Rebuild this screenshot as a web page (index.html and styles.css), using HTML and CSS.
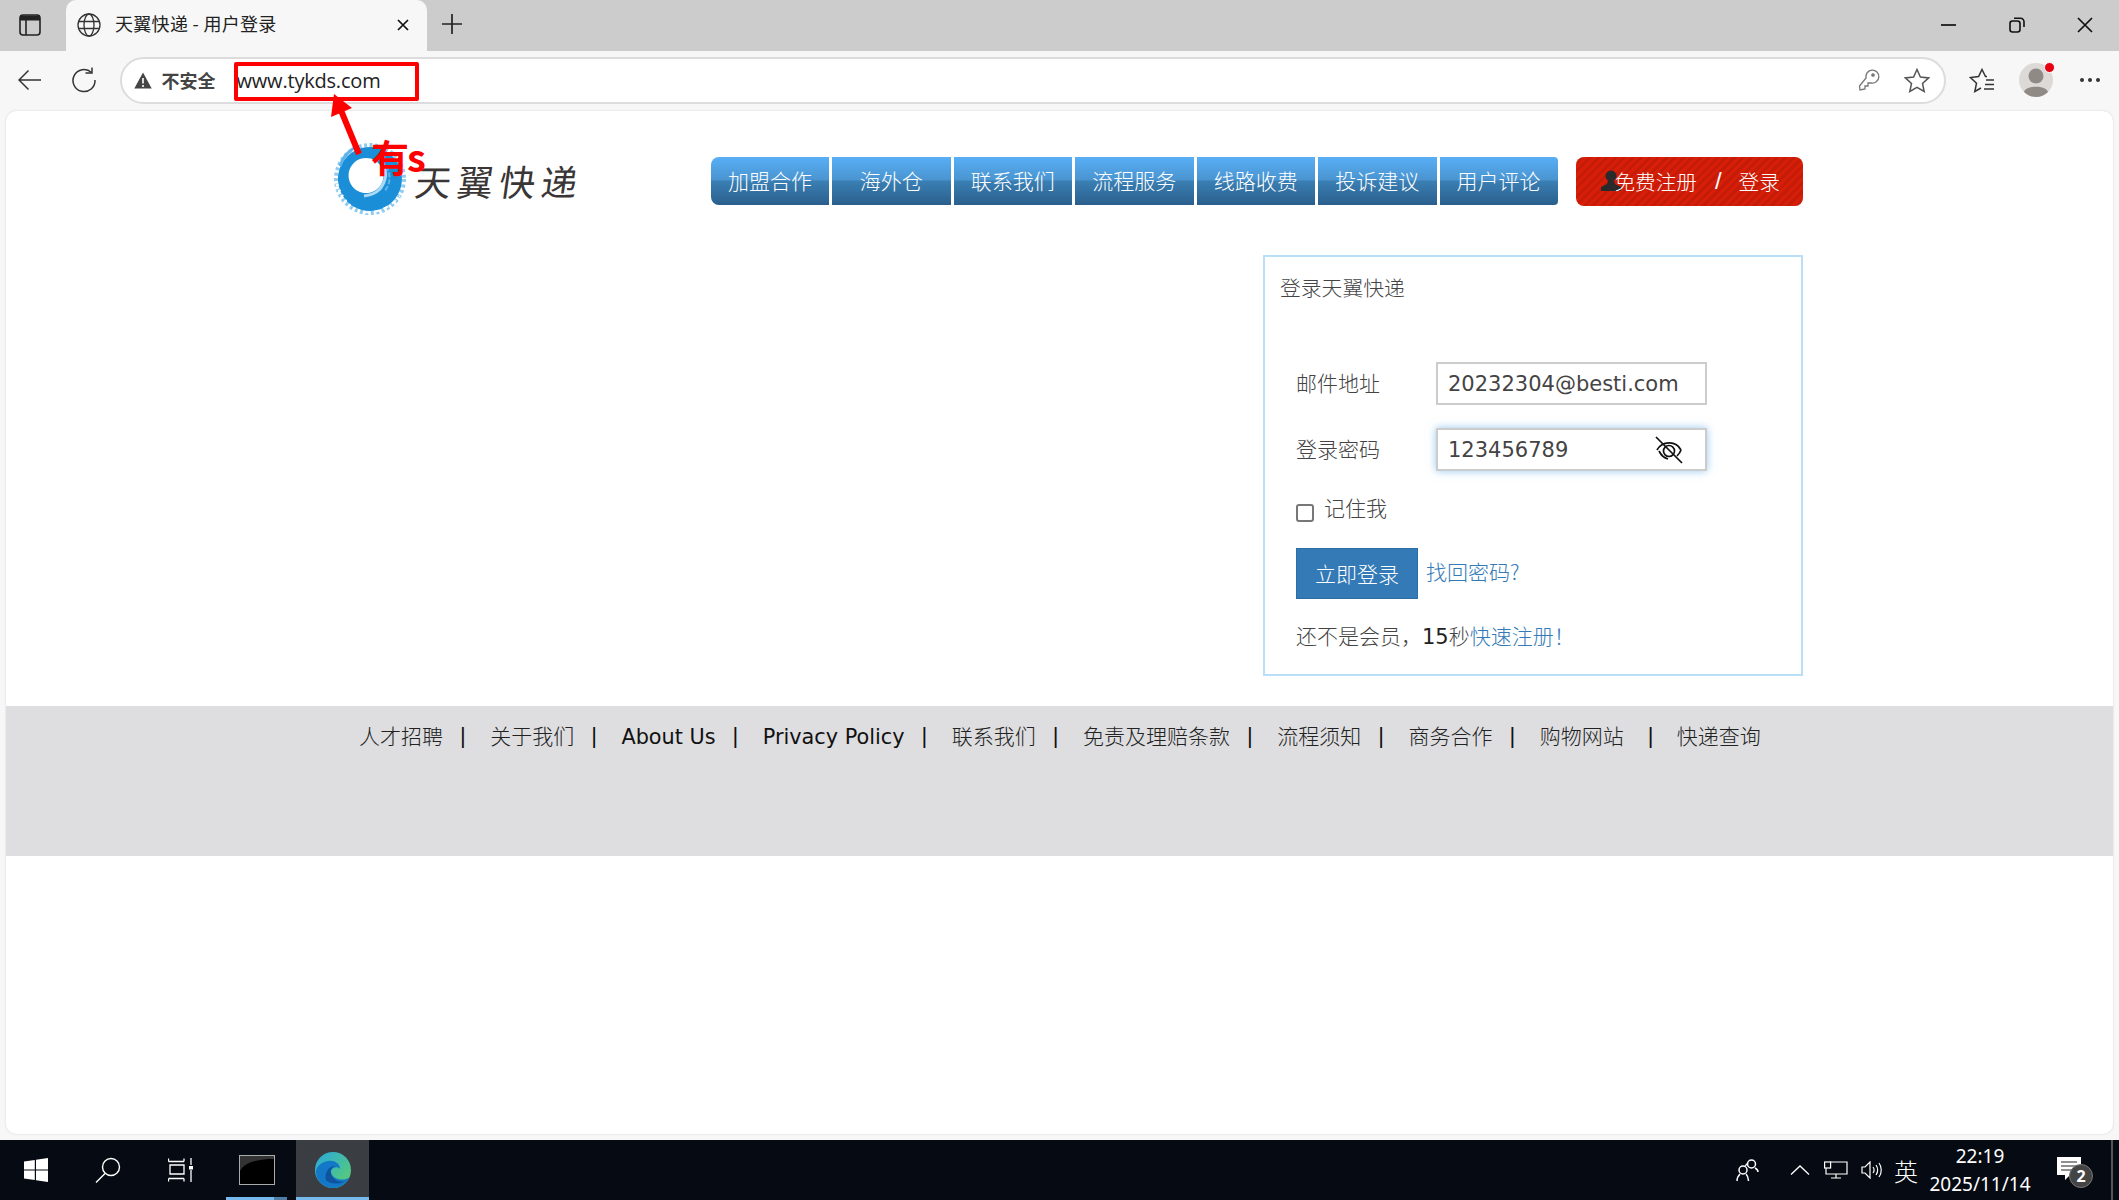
FILE: index.html
```html
<!DOCTYPE html>
<html lang="zh-CN">
<head>
<meta charset="UTF-8">
<title>天翼快递 - 用户登录</title>
<link rel="stylesheet" href="styles.css">
</head>
<body>
<div class="browser">

<div class="tabstrip">
  <svg class="ic-sidebar" width="22" height="22" viewBox="0 0 22 22" fill="none" stroke="#222" stroke-width="1.6"><rect x="1" y="1" width="20" height="20" rx="3"/><path d="M7 6V21"/><path d="M1 6H21" stroke-width="5" transform="translate(0 -2)"/></svg>
  <div class="tab">
    <svg width="24" height="24" viewBox="0 0 24 24" fill="none" stroke="#333" stroke-width="1.3"><circle cx="12" cy="12" r="11"/><ellipse cx="12" cy="12" rx="5" ry="11"/><path d="M1.5 8.5H22.5M1.5 15.5H22.5"/></svg>
    <span class="tab-title">天翼快递 - 用户登录</span>
    <svg class="tab-close" width="14" height="14" viewBox="0 0 14 14" stroke="#111" stroke-width="1.7"><path d="M2 2L12 12M12 2L2 12"/></svg>
  </div>
  <svg class="ic-plus" width="22" height="22" viewBox="0 0 22 22" stroke="#222" stroke-width="1.7"><path d="M11 1V21M1 11H21"/></svg>
  <div class="win-btns">
    <svg width="16" height="16" viewBox="0 0 16 16" stroke="#111" stroke-width="1.7"><path d="M0 8H15"/></svg>
    <svg width="16" height="16" viewBox="0 0 16 16" fill="none" stroke="#111" stroke-width="1.6"><rect x="1" y="4" width="10" height="11" rx="2.5"/><path d="M5 1.2H11.5A3.5 3.5 0 0 1 15 4.7V10"/></svg>
    <svg width="16" height="16" viewBox="0 0 16 16" stroke="#111" stroke-width="1.7"><path d="M1 1L15 15M15 1L1 15"/></svg>
  </div>
</div>

<div class="toolbar">
  <svg width="24" height="24" viewBox="0 0 24 24" fill="none" stroke="#333" stroke-width="1.5"><path d="M1 12H23M10.5 2.5L1 12L10.5 21.5"/></svg>
  <svg width="26" height="26" viewBox="0 0 26 26" fill="none" stroke="#333" stroke-width="1.5"><path d="M20.5 5.5A11 11 0 1 0 24 13"/><path d="M14.5 6H21V0.5" /></svg>
  <div class="addressbar">
    <svg width="18" height="17" viewBox="0 0 18 17"><path d="M9 0.5L17.7 16.5H0.3Z" fill="#444"/><path d="M9 6V11.5M9 13V15" stroke="#fff" stroke-width="1.6"/></svg>
    <span class="not-secure">不安全</span>
    <span class="url">www.tykds.com</span>
    <svg class="ic-key" width="22" height="24" viewBox="0 0 22 24" fill="none" stroke="#777" stroke-width="1.3"><path d="M8 10A6.5 6.5 0 1 1 13 15L10 15L10 18L7 18L7 21L2 22L1.5 18Z"/><circle cx="15" cy="7" r="1.2" fill="#777"/></svg>
    <svg width="26" height="25" viewBox="0 0 26 25" fill="none" stroke="#555" stroke-width="1.5"><path d="M13 1.5L16.4 9L24.6 9.9L18.5 15.4L20.2 23.5L13 19.4L5.8 23.5L7.5 15.4L1.4 9.9L9.6 9Z"/></svg>
  </div>
  <svg class="ic-fav" width="26" height="25" viewBox="0 0 26 25" fill="none" stroke="#333" stroke-width="1.5"><path d="M18 8.5L16.5 8.5L13 1.5L9.6 8.5L1.4 9.6L7.5 15.2L5.8 23.5L12 20"/><path d="M17 12H25M16 16.5H25M15 21H25"/></svg>
  <div class="avatar">
    <svg width="34" height="34" viewBox="0 0 34 34"><circle cx="17" cy="17" r="17" fill="#dcd9d6"/><circle cx="17" cy="13" r="7.5" fill="#8f8a86"/><path d="M5 29C7 22 27 22 29 29A17 17 0 0 1 5 29Z" fill="#8f8a86"/></svg>
    <span class="avatar-dot"></span>
  </div>
  <svg class="ic-more" width="22" height="6" viewBox="0 0 22 6" fill="#333"><circle cx="3" cy="3" r="2"/><circle cx="11" cy="3" r="2"/><circle cx="19" cy="3" r="2"/></svg>
</div>

<div class="page">
  <div class="wrap">
    <div class="site-head">
      <div class="logo">
        <svg class="logo-swirl" width="72" height="74" viewBox="0 0 72 74" fill="none">
          <circle cx="36" cy="37" r="34" stroke="#8fccf0" stroke-width="4" stroke-dasharray="3 2.5"/>
          <path fill-rule="evenodd" fill="#1a8fd8" d="M36 5A32 32 0 1 1 35.9 5ZM32 16A17.5 17.5 0 1 0 32.1 16Z"/>
          <path d="M20 6Q10 12 6 24" stroke="#5db3ea" stroke-width="3"/>
          <path d="M48 20Q56 34 46 47Q40 53 30 54" stroke="#a9d9f5" stroke-width="3"/>
          <path d="M52 24Q60 38 50 50" stroke="#5fb5ea" stroke-width="2" stroke-dasharray="5 2"/>
          <path d="M3 42Q8 60 24 70" stroke="#fff" stroke-width="3" stroke-dasharray="2 4"/>
          <path d="M30 70Q50 72 66 54" stroke="#fff" stroke-width="2" stroke-dasharray="5 5"/>
        </svg>
        <span class="logo-text">天翼快递</span>
      </div>
      <nav class="nav">
        <a class="nav-item first">加盟合作</a>
        <a class="nav-item">海外仓</a>
        <a class="nav-item">联系我们</a>
        <a class="nav-item">流程服务</a>
        <a class="nav-item">线路收费</a>
        <a class="nav-item">投诉建议</a>
        <a class="nav-item last">用户评论</a>
      </nav>
      <div class="reg-btn">
        <svg width="20" height="21" viewBox="0 0 20 21" fill="#2a2a2a"><circle cx="10" cy="6" r="5.5"/><path d="M7 11H13L14 14L20 17V21H0V17L6 14Z"/></svg>
        <span>免费注册</span><span class="reg-slash">/</span><span>登录</span>
      </div>
    </div>

    <div class="main-row">
      <div class="login-box">
        <div class="login-title">登录天翼快递</div>
        <div class="form-row">
          <label class="form-label">邮件地址</label>
          <input class="form-input" type="text" value="20232304@besti.com">
        </div>
        <div class="form-row">
          <label class="form-label">登录密码</label>
          <div class="pass-wrap">
            <input class="form-input focused" type="text" value="123456789">
            <svg class="eye" width="30" height="30" viewBox="0 0 30 30" fill="none" stroke="#111" stroke-width="1.7"><path d="M2 2L28 28"/><path d="M3 15C8 6 22 5 27 15"/><path d="M5 16C7 20 10 23 14 24M27 15C26 18 25 19 23 21"/><circle cx="15" cy="16" r="5.5"/></svg>
          </div>
        </div>
        <div class="remember">
          <span class="checkbox"></span>
          <span class="remember-text">记住我</span>
        </div>
        <div class="submit-row">
          <span class="submit-btn">立即登录</span>
          <a class="link forgot">找回密码?</a>
        </div>
        <div class="signup">还不是会员，<span class="num">15</span>秒<a class="link">快速注册！</a></div>
      </div>
    </div>
  </div>

  <footer class="site-foot">
    <a>人才招聘</a><i>|</i>
    <a>关于我们</a><i>|</i>
    <a class="latin">About Us</a><i>|</i>
    <a class="latin">Privacy Policy</a><i>|</i>
    <a>联系我们</a><i>|</i>
    <a>免责及理赔条款</a><i>|</i>
    <a>流程须知</a><i>|</i>
    <a>商务合作</a><i>|</i>
    <a>购物网站</a><i class="wide">|</i>
    <a>快递查询</a>
  </footer>
</div>

<div class="taskbar">
  <svg class="tb-win" width="24" height="24" viewBox="0 0 24 24" fill="#fff"><path d="M0 3.5L10.8 2V11.4H0ZM12 1.8L24 0V11.4H12ZM0 12.6H10.8V22L0 20.5ZM12 12.6H24V24L12 22.2Z"/></svg>
  <svg class="tb-search" width="26" height="26" viewBox="0 0 26 26" fill="none" stroke="#fff" stroke-width="1.4"><circle cx="16" cy="10" r="8.5"/><path d="M10 16.5L1 25.5"/></svg>
  <svg class="tb-tasks" width="26" height="24" viewBox="0 0 26 24" fill="none" stroke="#fff" stroke-width="1.3"><path d="M0.5 3.5V0.5M16 3.5V0.5M0.5 3.5H16M2 7H16V16H2ZM0.5 20.5H16M0.5 23.5V20.5M16 23.5V20.5M23 0V7M23 12V24"/><rect x="21" y="8" width="4" height="3.5" fill="#fff" stroke="none"/></svg>
  <div class="tb-app">
    <svg width="36" height="30" viewBox="0 0 36 30"><rect x="0.5" y="0.5" width="35" height="29" fill="#000" stroke="#aaa"/><path d="M1 16C6 6 22 4 35 4V1H1Z" fill="#333"/></svg>
    <span class="tb-line split"></span>
  </div>
  <div class="tb-app active">
    <svg width="36" height="36" viewBox="0 0 36 36"><defs><linearGradient id="edgeA" x1="0" y1="0" x2="1" y2="1"><stop offset="0" stop-color="#28a9e0"/><stop offset="1" stop-color="#5fd067"/></linearGradient></defs><circle cx="18" cy="18" r="18" fill="url(#edgeA)"/><path d="M1 20C1 30 10 36 18 36C26 36 31 32 35 25C28 30 18 27 16 21C15 17 21 13 25 17C25 11 19 8 13 9C6 10 1 15 1 20Z" fill="#1478c8"/><path d="M11 28C14 32 24 33 30 29C23 31 17 27 16 21C15 17 18 15 20 14C14 14 9 21 11 28Z" fill="#0f539e"/></svg>
    <span class="tb-line"></span>
  </div>
  <div class="tray">
    <svg class="tr-people" width="24" height="24" viewBox="0 0 24 24" fill="none" stroke="#fff" stroke-width="1.5"><circle cx="15.5" cy="6" r="4"/><circle cx="7" cy="12" r="4"/><path d="M12 5C9 7 10 8 10 8M19 10C21 11 22 13 22 14M1 23C1 19 3 17 4 16M10 16C12 18 12 20 12.5 23"/></svg>
    <svg class="tr-chev" width="20" height="10" viewBox="0 0 20 10" fill="none" stroke="#fff" stroke-width="1.3"><path d="M1 9.5L10 1L19 9.5"/></svg>
    <svg class="tr-net" width="24" height="18" viewBox="0 0 24 18" fill="none" stroke="#fff" stroke-width="1.2"><path d="M6 1H23V13H2V7M12 13V17M7 17H17"/><rect x="0.6" y="1" width="6" height="6"/></svg>
    <svg class="tr-vol" width="22" height="18" viewBox="0 0 22 18" fill="none" stroke="#fff" stroke-width="1.2"><path d="M1 6H4L9 1V17L4 12H1Z"/><path d="M12 6C13.5 8 13.5 10 12 12M15 4C17 7 17 11 15 14M18 2C21 6 21 12 18 16"/></svg>
    <span class="tr-ime">英</span>
    <div class="clock"><span>22:19</span><span>2025/11/14</span></div>
    <div class="notify">
      <svg width="24" height="24" viewBox="0 0 24 24"><path d="M0 0H24V18H13L8 23V18H0Z" fill="#fff"/><path d="M4 5H20M4 9H20M4 13H16" stroke="#222" stroke-width="1.2"/></svg>
      <span class="notify-num">2</span>
    </div>
    <span class="tb-edge"></span>
  </div>
</div>

<!-- red marks somebody drew on top of the screenshot -->
<div class="mark-box"></div>
<svg class="mark-arrow" width="40" height="64" viewBox="0 0 40 64" fill="none"><path d="M33 60L14 14" stroke="#f00" stroke-width="6"/><path d="M8 0L26 14L5 23Z" fill="#f00"/></svg>
<span class="mark-text">有s</span>

</div>
</body>
</html>
```

FILE: styles.css
```css
* { box-sizing: border-box; }
html, body { height: 100%; }
body { margin: 0; overflow: hidden; font-family: "Liberation Sans", "Noto Sans CJK SC", sans-serif; background: #f7f7f7; }
a { text-decoration: none; }

.browser { position: relative; display: flex; flex-direction: column; height: 1200px; }

/* tab strip */
.tabstrip { display: flex; align-items: center; height: 51px; background: #cccccc; padding-left: 19px; flex: none; }
.ic-sidebar { margin-right: 25px; margin-top: -2px; }
.tab { display: flex; align-items: center; width: 361px; height: 51px; background: #f7f7f7; border-radius: 10px 10px 0 0; padding: 0 0 2px 11px; }
.tab-title { margin: -3px 0 0 14px; font: 18px "Noto Sans CJK SC", sans-serif; color: #222; width: 281px; letter-spacing: .3px; }
.ic-plus { margin-left: 14px; margin-top: -4px; }
.win-btns { display: flex; margin-left: auto; gap: 52px; padding-right: 26px; margin-top: -2px; }

/* toolbar */
.toolbar { display: flex; align-items: center; height: 60px; padding: 0 0 2px 18px; flex: none; }
.toolbar > svg:nth-child(2) { margin-left: 29px; }
.addressbar { display: flex; align-items: center; height: 47px; width: 1826px; margin-left: 22.5px; border: 2px solid #dcdcdc; border-radius: 24px; background: #fff; padding: 0 14px 0 12px; }
.not-secure { margin-left: 10px; font: bold 18px "Noto Sans CJK SC", sans-serif; color: #444; }
.url { margin-left: 21px; font: 20px "Open Sans", sans-serif; color: #222; letter-spacing: -0.2px; }
.ic-key { margin-left: auto; margin-right: 24px; }
.ic-fav { margin-left: 23.5px; }
.avatar { position: relative; width: 34px; height: 34px; margin-left: 24px; }
.avatar svg { display: block; }
.avatar-dot { position: absolute; top: -1px; right: -2px; width: 11px; height: 11px; background: #e60012; border: 1px solid #fff; border-radius: 50%; }
.ic-more { margin-left: 26px; }

/* page */
.page { flex: 1; margin: 0 6px 6px; background: #fff; border-radius: 10px; box-shadow: 0 0 2px #ccc; overflow: hidden; }
.wrap { width: 1469px; margin-left: 328px; padding-top: 46px; font-family: "Noto Sans CJK SC", sans-serif; font-weight: 300; }

.site-head { display: flex; align-items: flex-start; height: 98px; }
.logo { display: flex; width: 377px; margin-top: -15px; }
.logo-swirl { filter: blur(.6px); }
.logo-text { margin: 12px 0 0 9px; font: 400 36px "Noto Sans CJK SC", sans-serif; color: #3a3636; letter-spacing: 6px; white-space: nowrap; transform: skewX(-8deg); }

.nav { display: flex; gap: 3px; }
.nav-item { display: flex; align-items: center; justify-content: center; width: 118.5px; height: 48px; padding-bottom: 2px; font-size: 21px; color: #fff; background: linear-gradient(#58aff6, #4a94d0 48%, #3a7fb4 50%, #2a5f8c); }
.nav-item.first { width: 118px; border-radius: 8px 0 0 8px; }
.nav-item.last { width: 118px; border-radius: 0 4px 4px 0; }

.reg-btn { display: flex; align-items: center; width: 227px; height: 49px; margin-left: 18px; padding: 0 0 2px 25px; border-radius: 8px; font-size: 20.6px; color: #fff; background: repeating-linear-gradient(135deg, #d81e06 0 3px, #c41c08 3px 6px); }
.reg-btn svg { margin-right: -6px; }
.reg-slash { margin: 0 17px 0 18px; font-family: "Liberation Sans", sans-serif; font-weight: 400; font-size: 24px; }

.main-row { display: flex; justify-content: flex-end; }
.login-box { width: 540px; height: 421px; padding: 17px 16px 0 15px; border: 2px solid #b9def8; color: #444; font-size: 21px; }
.login-title { height: 88px; line-height: 26px; font-size: 20.8px; }
.form-row { display: flex; align-items: center; height: 43px; margin-bottom: 23px; padding-left: 16px; }
.form-label { width: 140px; font-size: 21px; padding-bottom: 4px; }
.form-input { width: 271px; height: 43px; padding: 0 10px; border: 2px solid #cccccc; font: 400 21px "DejaVu Sans", sans-serif; color: #444; background: #fff; outline: none; }
.form-input.focused { box-shadow: 0 0 8px rgba(102, 175, 233, .7); }
.pass-wrap { position: relative; }
.eye { position: absolute; top: 7px; right: 23px; }

.remember { display: flex; align-items: flex-start; margin: 5px 0 0 16px; height: 54px; }
.checkbox { width: 18px; height: 18px; margin-top: 10px; border: 2px solid #777; border-radius: 3px; background: #fff; }
.remember-text { margin: 1px 0 0 10px; font-size: 21px; line-height: 24px; }

.submit-row { display: flex; align-items: flex-start; margin: 0 0 0 16px; height: 74px; }
.submit-btn { display: flex; align-items: center; justify-content: center; width: 122px; height: 51px; background: #337ab7; border: 1px solid #2e6da4; color: #fff; font-size: 21px; padding-bottom: 2px; }
.link { color: #337ab7; }
.forgot { margin: 8px 0 0 8px; font-size: 21px; }
.signup { margin-left: 16px; font-size: 21px; line-height: 26px; }
.num { font: 400 21px "DejaVu Sans", sans-serif; color: #222; }

/* footer */
.site-foot { display: flex; align-items: center; height: 150px; margin-top: 30px; padding: 0 0 88px 353px; background: #dedee0; font-family: "Noto Sans CJK SC", sans-serif; font-weight: 300; font-size: 21px; color: #222; white-space: nowrap; }
.site-foot a { padding-bottom: 4px; }
.site-foot a.latin { padding-bottom: 0; font: 400 20.8px "DejaVu Sans", sans-serif; color: #111; }
.site-foot i { margin: 0 24.5px 0 17px; padding-bottom: 2px; font: 400 22px "Liberation Sans", sans-serif; color: #111; }
.site-foot i.wide { margin: 0 23.5px 0 24px; }

/* taskbar */
.taskbar { display: flex; align-items: center; height: 60px; background: #060a12; flex: none; padding-left: 24px; color: #fff; }
.tb-search { margin-left: 47px; }
.tb-tasks { margin-left: 47px; }
.tb-app { position: relative; display: flex; align-items: center; justify-content: center; width: 73px; height: 60px; }
.tb-app:nth-of-type(1) { margin-left: 32px; width: 61px; }
.tb-app.active { background: #3a3d42; margin-left: 9px; }
.tb-line { position: absolute; left: 0; right: 0; bottom: 0; height: 3px; background: #76b9ed; }
.tb-line.split { background: linear-gradient(90deg, #76b9ed 78%, #4f7fa8 78%); }
.tray { display: flex; align-items: center; margin-left: auto; height: 60px; }
.tr-chev { margin-left: 30px; }
.tr-net { margin-left: 14px; }
.tr-vol { margin-left: 13px; }
.tr-ime { margin-left: 11px; font: 300 24px "Noto Sans CJK SC", sans-serif; }
.clock { display: flex; flex-direction: column; align-items: center; width: 106px; margin-left: 9px; font: 19px/28px "Noto Sans", sans-serif; color: #fff; }
.notify { position: relative; width: 26px; height: 26px; margin-left: 24px; margin-right: 36px; }
.notify-num { position: absolute; left: 12px; top: 7px; width: 24px; height: 24px; border-radius: 50%; background: #444; border: 1px solid #777; color: #fff; font: bold 16px/22px "Noto Sans", sans-serif; text-align: center; }
.tb-edge { position: absolute; right: 6px; width: 2px; height: 60px; background: #555; }

/* annotations */
.mark-box { position: absolute; left: 234px; top: 62px; width: 185px; height: 39px; border: 4px solid #f00; border-radius: 2px; }
.mark-arrow { position: absolute; left: 326px; top: 94px; }
.mark-text { position: absolute; left: 371px; top: 128px; font: bold 38px "Noto Sans CJK SC", sans-serif; color: #f00; letter-spacing: -2px; }
```
